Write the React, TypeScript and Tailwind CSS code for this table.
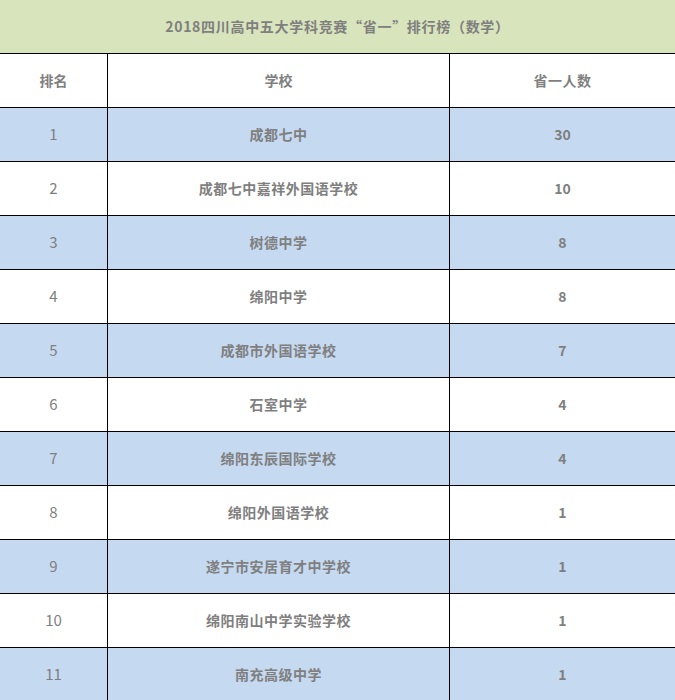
const rows: [string, string, string][] = [
  ['1', '成都七中', '30'],
  ['2', '成都七中嘉祥外国语学校', '10'],
  ['3', '树德中学', '8'],
  ['4', '绵阳中学', '8'],
  ['5', '成都市外国语学校', '7'],
  ['6', '石室中学', '4'],
  ['7', '绵阳东辰国际学校', '4'],
  ['8', '绵阳外国语学校', '1'],
  ['9', '遂宁市安居育才中学校', '1'],
  ['10', '绵阳南山中学实验学校', '1'],
  ['11', '南充高级中学', '1'],
];

const font = { fontFamily: '"Noto Sans CJK SC", "Noto Sans", sans-serif' };

export default function App() {
  return (
    <div className="w-[675px] h-[700px] overflow-hidden bg-white text-[14px] text-[#7f7f7f]" style={font}>
      <div className="h-[54px] flex items-center justify-center bg-[#d8e4bc] border-b border-black font-bold tracking-[0.7px]">
        2018四川高中五大学科竞赛“省一”排行榜（数学）
      </div>
      <div className="h-[54px] flex border-b border-black font-bold bg-white">
        <div className="w-[108px] flex items-center justify-center border-r border-black">排名</div>
        <div className="w-[342px] flex items-center justify-center border-r border-black">学校</div>
        <div className="flex-1 flex items-center justify-center tracking-[0.5px]">省一人数</div>
      </div>
      {rows.map(([rank, school, count], i) => (
        <div key={rank} className={`h-[54px] flex border-b border-black ${i % 2 === 0 ? 'bg-[#c5d9f1]' : 'bg-white'}`}>
          <div className="w-[108px] flex items-center justify-center border-r border-black text-[15px]">{rank}</div>
          <div className="w-[342px] flex items-center justify-center border-r border-black font-bold tracking-[0.5px]">{school}</div>
          <div className="flex-1 flex items-center justify-center font-bold">{count}</div>
        </div>
      ))}
    </div>
  );
}
